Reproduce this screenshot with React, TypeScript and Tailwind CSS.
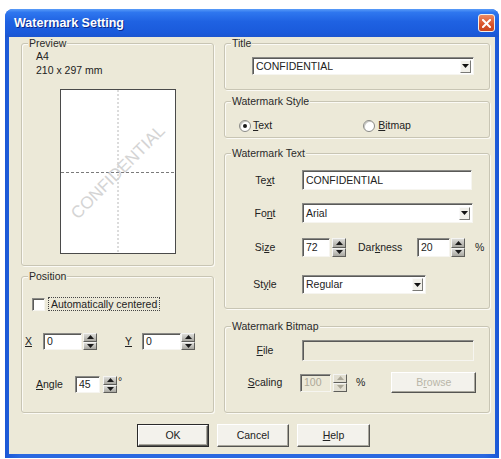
import React from "react";

const sunken =
  "border border-t-[#8a8a86] border-l-[#8a8a86] border-b-[#f6f5f0] border-r-[#f6f5f0] shadow-[inset_1px_1px_0_#5a5a58]";

function Group({
  label,
  className = "",
  children,
}: {
  label: string;
  className?: string;
  children?: React.ReactNode;
}) {
  return (
    <div
      className={`relative rounded-[3px] border border-[#c8c5b4] shadow-[inset_1px_1px_0_#fbfaf5,1px_1px_0_#fbfaf5] ${className}`}
    >
      <span className="absolute left-[6px] top-[-7px] bg-[#ECE9D8] px-[1px] leading-[13px] text-[#2a2a2a]">
        {label}
      </span>
      {children}
    </div>
  );
}

function Field({
  value,
  className = "",
  disabled = false,
}: {
  value?: string;
  className?: string;
  disabled?: boolean;
}) {
  return (
    <div
      className={`flex items-center overflow-hidden pl-[3px] ${sunken} ${
        disabled ? "bg-[#ECE9D8] text-[#aca899]" : "bg-white text-[#222]"
      } ${className}`}
    >
      {value}
    </div>
  );
}

function Arrow({ up, color }: { up: boolean; color: string }) {
  return (
    <svg width="7" height="4" viewBox="0 0 7 4">
      <path d={up ? "M0 4 L3.5 0 L7 4 Z" : "M0 0 L7 0 L3.5 4 Z"} fill={color} />
    </svg>
  );
}

function Spin({ className = "", disabled = false }: { className?: string; disabled?: boolean }) {
  const half = `flex flex-1 items-center justify-center border border-t-[#f4f4f2] border-l-[#f4f4f2] border-b-[#5e5e5a] border-r-[#5e5e5a] ${
    disabled ? "bg-[#e2dfd2]" : "bg-[linear-gradient(#dcdcd8,#a8a7a0)]"
  }`;
  const c = disabled ? "#aca899" : "#1a1a1a";
  return (
    <div className={`flex w-[14px] flex-col ${className}`}>
      <div className={half}>
        <Arrow up color={c} />
      </div>
      <div className={half}>
        <Arrow up={false} color={c} />
      </div>
    </div>
  );
}

function Combo({ value, className = "" }: { value: string; className?: string }) {
  return (
    <div className={`flex items-center bg-white ${sunken} ${className}`}>
      <span className="flex-1 pl-[3px] text-[#222]">{value}</span>
      <div className="mr-[2px] flex h-[13px] w-[11px] items-center justify-center border border-t-[#fafafa] border-l-[#fafafa] border-b-[#7a7a76] border-r-[#7a7a76] bg-[#f1f0ea]">
        <Arrow up={false} color="#111" />
      </div>
    </div>
  );
}

function Radio({ checked }: { checked?: boolean }) {
  return (
    <div className="flex h-[12px] w-[12px] items-center justify-center rounded-full border border-[#8a8a86] bg-white shadow-[inset_1px_1px_0_#c8c8c4]">
      {checked && <div className="h-[4px] w-[4px] rounded-full bg-[#1a1a1a]" />}
    </div>
  );
}

function Btn({
  children,
  className = "",
  def = false,
  disabled = false,
}: {
  children: React.ReactNode;
  className?: string;
  def?: boolean;
  disabled?: boolean;
}) {
  return (
    <div
      className={`flex items-center justify-center ${
        def ? "border border-[#2a2a2a]" : ""
      } ${className}`}
    >
      <div
        className={`flex h-full w-full items-center justify-center border border-t-[#ffffff] border-l-[#ffffff] border-b-[#555552] border-r-[#555552] bg-[#f3f2ec] shadow-[inset_-1px_-1px_0_#a9a79d] ${
          disabled ? "text-[#b9b6a8]" : "text-[#222]"
        }`}
      >
        {children}
      </div>
    </div>
  );
}

function Paper() {
  return (
    <div className="mx-auto mt-[12px] h-[165px] w-[116px] border border-[#4a4a4a] bg-white">
      <svg width="114" height="163" viewBox="0 0 114 163">
        <line x1="57" y1="0" x2="57" y2="163" stroke="#b8b8b8" strokeWidth="1" strokeDasharray="2 2" />
        <line x1="0" y1="82.5" x2="114" y2="82.5" stroke="#7a7a7a" strokeWidth="1" strokeDasharray="3 2" />
        <text
          x="57"
          y="82"
          transform="rotate(-45 57 82)"
          textAnchor="middle"
          dominantBaseline="central"
          fontFamily="'Liberation Sans', Arial, sans-serif"
          fontSize="17"
          fill="#d4d4d4"
        >
          CONFIDENTIAL
        </text>
      </svg>
    </div>
  );
}

export default function App() {
  return (
    <div className="h-[459px] w-[501px] bg-white pl-[5px] pt-[9px] font-['Liberation_Sans',Arial,sans-serif]">
      <div className="flex h-[449px] w-[494px] flex-col rounded-t-[8px] bg-[linear-gradient(90deg,#1a57d6,#2a68e0_3%,#2a68e0_97%,#1a57d6)]">
        {/* title bar */}
        <div className="flex h-[28px] items-center justify-between rounded-t-[8px] bg-[linear-gradient(#5a9cf8,#2f77ef_12%,#1f62e2_45%,#1a5adb_85%,#1c55cf)] pl-[9px] pr-[4px]">
          <span className="text-[12.5px] font-bold text-white [text-shadow:1px_1px_0_#0a2a8a]">
            Watermark Setting
          </span>
          <div className="flex h-[18px] w-[17px] items-center justify-center rounded-[3px] border border-[#f4efe8] bg-[linear-gradient(#ec8a62,#d9522a_60%,#c8461f)]">
            <svg width="9" height="9" viewBox="0 0 9 9">
              <path d="M1 1 L8 8 M8 1 L1 8" stroke="#fff" strokeWidth="2" strokeLinecap="square" />
            </svg>
          </div>
        </div>

        {/* client area */}
        <div className="mx-[4px] mb-[4px] flex-1 bg-[#ECE9D8] pl-[12px] pr-[5px] pt-[6px] text-[10.5px] leading-[13px] text-[#222]">
          <div className="flex gap-[10px]">
            {/* left column */}
            <div className="flex w-[193px] flex-col gap-[10px]">
              <Group label="Preview" className="h-[223px]">
                <div className="pl-[14px] pt-[5px] leading-[14px]">
                  <div>A4</div>
                  <div>210 x 297 mm</div>
                </div>
                <Paper />
              </Group>

              <Group label="Position" className="h-[137px]">
                <div className="ml-[10px] mt-[20px] flex h-[14px] items-center">
                  <div className={`h-[13px] w-[13px] bg-white ${sunken}`} />
                  <div className="ml-[3px] border border-dotted border-[#444] px-[2px] leading-[12px]">
                    Automatically centered
                  </div>
                </div>
                <div className="ml-[3px] mt-[22px] flex h-[17px] items-stretch">
                  <span className="flex w-[18px] items-center underline">X</span>
                  <Field value="0" className="w-[39px]" />
                  <Spin className="ml-[1px]" />
                  <span className="ml-[28px] flex w-[17px] items-center underline">Y</span>
                  <Field value="0" className="w-[39px]" />
                  <Spin />
                </div>
                <div className="ml-[14px] mt-[26px] flex h-[17px] items-stretch">
                  <span className="flex w-[39px] items-center">
                    <span className="underline">A</span>ngle
                  </span>
                  <Field value="45" className="w-[25px]" />
                  <Spin className="ml-[3px]" />
                  <span className="ml-[1px] leading-[10px]">°</span>
                </div>
              </Group>
            </div>

            {/* right column */}
            <div className="flex w-[266px] flex-col">
              <Group label="Title" className="h-[47px]">
                <Combo value="CONFIDENTIAL" className="ml-[27px] mt-[13px] h-[18px] w-[222px]" />
              </Group>

              <Group label="Watermark Style" className="mt-[11px] h-[37px]">
                <div className="ml-[14px] mt-[17px] flex h-[13px] items-center">
                  <Radio checked />
                  <span className="ml-[2px]">
                    <span className="underline">T</span>ext
                  </span>
                  <div className="ml-[91px]">
                    <Radio />
                  </div>
                  <span className="ml-[3px]">
                    <span className="underline">B</span>itmap
                  </span>
                </div>
              </Group>

              <Group label="Watermark Text" className="mt-[15px] h-[156px]">
                <div className="ml-[20px] mt-[16px] flex h-[20px] items-stretch">
                  <span className="flex w-[40px] items-center justify-center">
                    Te<span className="underline">x</span>t
                  </span>
                  <Field value="CONFIDENTIAL" className="ml-[17px] w-[170px]" />
                </div>
                <div className="ml-[20px] mt-[13px] flex h-[20px] items-stretch">
                  <span className="flex w-[40px] items-center justify-center">
                    Fo<span className="underline">n</span>t
                  </span>
                  <Combo value="Arial" className="ml-[17px] w-[171px]" />
                </div>
                <div className="ml-[20px] mt-[15px] flex h-[19px] items-stretch">
                  <span className="flex w-[40px] items-center justify-center">
                    Si<span className="underline">z</span>e
                  </span>
                  <Field value="72" className="ml-[17px] w-[28px]" />
                  <Spin className="ml-[2px]" />
                  <span className="ml-[12px] flex w-[59px] items-center">
                    Dar<span className="underline">k</span>ness
                  </span>
                  <Field value="20" className="w-[33px]" />
                  <Spin className="ml-[1px]" />
                  <span className="ml-[10px] flex items-center">%</span>
                </div>
                <div className="ml-[20px] mt-[18px] flex h-[19px] items-stretch">
                  <span className="flex w-[40px] items-center justify-center">
                    St<span className="underline">y</span>le
                  </span>
                  <Combo value="Regular" className="ml-[17px] w-[124px]" />
                </div>
              </Group>

              <Group label="Watermark Bitmap" className="mt-[17px] h-[87px]">
                <div className="ml-[20px] mt-[13px] flex h-[21px] items-stretch">
                  <span className="flex w-[40px] items-center justify-center">
                    <span className="underline">F</span>ile
                  </span>
                  <Field disabled className="ml-[17px] w-[172px]" />
                </div>
                <div className="ml-[20px] mt-[11px] flex h-[21px] items-center">
                  <span className="flex w-[40px] items-center justify-center">
                    <span className="underline">S</span>caling
                  </span>
                  <Field disabled value="100" className="ml-[15px] h-[18px] w-[31px]" />
                  <Spin disabled className="ml-[2px] h-[18px]" />
                  <span className="ml-[9px]">%</span>
                  <Btn disabled className="ml-[26px] h-[21px] w-[85px]">
                    B<span className="underline">r</span>owse
                  </Btn>
                </div>
              </Group>
            </div>
          </div>

          {/* dialog buttons */}
          <div className="mt-[11px] flex gap-[8px] pl-[116px]">
            <Btn def className="h-[23px] w-[72px]">
              OK
            </Btn>
            <Btn className="h-[23px] w-[72px]">Cancel</Btn>
            <Btn className="h-[23px] w-[73px]">
              <span className="underline">H</span>elp
            </Btn>
          </div>
        </div>
      </div>
    </div>
  );
}
